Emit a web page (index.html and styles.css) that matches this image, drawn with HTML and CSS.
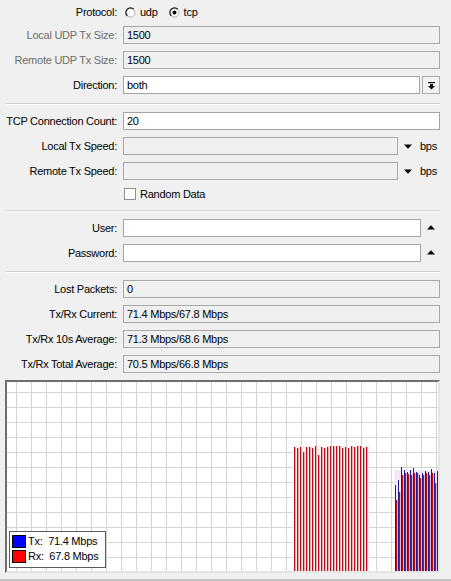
FILE: index.html
```html
<!DOCTYPE html>
<html>
<head>
<meta charset="utf-8">
<link rel="stylesheet" href="styles.css">
</head>
<body>
<div class="panel">
  <div class="row row-protocol">
    <div class="label">Protocol:</div>
    <div class="radios">
      <span class="radio">
        <svg width="11" height="11" viewBox="0 0 11 11"><circle cx="5.5" cy="5.5" r="4.5" fill="#fff" stroke="#b0b0b0" stroke-width="1"/><path d="M2.3 8.7 A4.5 4.5 0 0 1 8.7 2.3" fill="none" stroke="#202020" stroke-width="1.4"/></svg>
        <span>udp</span>
      </span>
      <span class="radio">
        <svg width="11" height="11" viewBox="0 0 11 11"><circle cx="5.5" cy="5.5" r="4.5" fill="#fff" stroke="#b0b0b0" stroke-width="1"/><path d="M2.3 8.7 A4.5 4.5 0 0 1 8.7 2.3" fill="none" stroke="#202020" stroke-width="1.4"/><circle cx="5.5" cy="5.5" r="2" fill="#000"/></svg>
        <span>tcp</span>
      </span>
    </div>
  </div>
  <div class="row">
    <div class="label disabled">Local UDP Tx Size:</div>
    <div class="field off">1500</div>
  </div>
  <div class="row">
    <div class="label disabled">Remote UDP Tx Size:</div>
    <div class="field off">1500</div>
  </div>
  <div class="row">
    <div class="label">Direction:</div>
    <div class="combo">
      <div class="field on">both</div>
      <div class="dropbtn">
        <svg width="7" height="8" viewBox="0 0 7 8"><rect x="0" y="0" width="7" height="1.2" fill="#000"/><rect x="2" y="2.2" width="3" height="2" fill="#000"/><polygon points="0,4 7,4 3.5,7.6" fill="#000"/></svg>
      </div>
    </div>
  </div>
  <div class="sep"></div>
  <div class="row">
    <div class="label">TCP Connection Count:</div>
    <div class="field on">20</div>
  </div>
  <div class="row">
    <div class="label">Local Tx Speed:</div>
    <div class="combo">
      <div class="field off"></div>
      <div class="trail trail-bps">
        <svg class="tri" width="8" height="5" viewBox="0 0 8 5"><polygon points="0,0.5 8,0.5 4,4.8" fill="#000"/></svg>
        <span class="unit">bps</span>
      </div>
    </div>
  </div>
  <div class="row">
    <div class="label">Remote Tx Speed:</div>
    <div class="combo">
      <div class="field off"></div>
      <div class="trail trail-bps">
        <svg class="tri" width="8" height="5" viewBox="0 0 8 5"><polygon points="0,0.5 8,0.5 4,4.8" fill="#000"/></svg>
        <span class="unit">bps</span>
      </div>
    </div>
  </div>
  <div class="row row-check">
    <div class="label"></div>
    <div class="check"><span class="box"></span><span>Random Data</span></div>
  </div>
  <div class="sep"></div>
  <div class="row">
    <div class="label">User:</div>
    <div class="combo">
      <div class="field on"></div>
      <div class="trail trail-up">
        <svg class="tri" width="8" height="5" viewBox="0 0 8 5"><polygon points="0,4.5 8,4.5 4,0.2" fill="#000"/></svg>
      </div>
    </div>
  </div>
  <div class="row">
    <div class="label">Password:</div>
    <div class="combo">
      <div class="field on"></div>
      <div class="trail trail-up">
        <svg class="tri" width="8" height="5" viewBox="0 0 8 5"><polygon points="0,4.5 8,4.5 4,0.2" fill="#000"/></svg>
      </div>
    </div>
  </div>
  <div class="sep"></div>
  <div class="row">
    <div class="label">Lost Packets:</div>
    <div class="field off">0</div>
  </div>
  <div class="row">
    <div class="label">Tx/Rx Current:</div>
    <div class="field off">71.4 Mbps/67.8 Mbps</div>
  </div>
  <div class="row">
    <div class="label">Tx/Rx 10s Average:</div>
    <div class="field off">71.3 Mbps/68.6 Mbps</div>
  </div>
  <div class="row">
    <div class="label">Tx/Rx Total Average:</div>
    <div class="field off">70.5 Mbps/66.8 Mbps</div>
  </div>
  <div class="graph">
    <svg class="bars" width="431" height="189" viewBox="0 0 431 189">
      <g fill="#fff0f0">
        <rect x="286" y="64" width="76" height="125"/>
      </g>
      <g fill="#b80c18">
        <rect x="287" y="65" width="1.3" height="124"/>
        <rect x="290" y="66" width="1.3" height="123"/>
        <rect x="293" y="65" width="1.3" height="124"/>
        <rect x="296" y="70" width="1.3" height="119"/>
        <rect x="299" y="65" width="1.3" height="124"/>
        <rect x="302" y="65" width="1.3" height="124"/>
        <rect x="305" y="66" width="1.3" height="123"/>
        <rect x="308" y="64" width="1.3" height="125"/>
        <rect x="311" y="73" width="1.3" height="116"/>
        <rect x="314" y="65" width="1.3" height="124"/>
        <rect x="317" y="66" width="1.3" height="123"/>
        <rect x="320" y="65" width="1.3" height="124"/>
        <rect x="323" y="64" width="1.3" height="125"/>
        <rect x="326" y="64" width="1.3" height="125"/>
        <rect x="329" y="64" width="1.3" height="125"/>
        <rect x="332" y="64" width="1.3" height="125"/>
        <rect x="335" y="66" width="1.3" height="123"/>
        <rect x="338" y="65" width="1.3" height="124"/>
        <rect x="341" y="66" width="1.3" height="123"/>
        <rect x="344" y="64" width="1.3" height="125"/>
        <rect x="347" y="65" width="1.3" height="124"/>
        <rect x="350" y="64" width="1.3" height="125"/>
        <rect x="353" y="64" width="1.3" height="125"/>
        <rect x="356" y="66" width="1.3" height="123"/>
        <rect x="359" y="65" width="1.3" height="124"/>
      </g>
      <g fill="#f3e6f5">
        <rect x="387.5" y="88" width="43.5" height="101"/>
      </g>
      <g fill="#1c1c9c">
        <rect x="388" y="103" width="1" height="86"/>
        <rect x="391" y="98" width="1" height="91"/>
        <rect x="394" y="85" width="1" height="104"/>
        <rect x="397" y="88" width="1" height="101"/>
        <rect x="400" y="90" width="1" height="99"/>
        <rect x="403" y="88" width="1" height="101"/>
        <rect x="406" y="86" width="1" height="103"/>
        <rect x="409" y="90" width="1" height="99"/>
        <rect x="412" y="93" width="1" height="96"/>
        <rect x="415" y="91" width="1" height="98"/>
        <rect x="418" y="89" width="1" height="100"/>
        <rect x="421" y="90" width="1" height="99"/>
        <rect x="424" y="87" width="1" height="102"/>
        <rect x="427" y="91" width="1" height="98"/>
        <rect x="430" y="89" width="1" height="100"/>
      </g>
      <g fill="#b80c18">
        <rect x="389" y="118" width="1.2" height="71"/>
        <rect x="392" y="110" width="1.2" height="79"/>
        <rect x="395" y="93" width="1.2" height="96"/>
        <rect x="398" y="91" width="1.2" height="98"/>
        <rect x="401" y="92" width="1.2" height="97"/>
        <rect x="404" y="93" width="1.2" height="96"/>
        <rect x="407" y="91" width="1.2" height="98"/>
        <rect x="410" y="91" width="1.2" height="98"/>
        <rect x="413" y="96" width="1.2" height="93"/>
        <rect x="416" y="93" width="1.2" height="96"/>
        <rect x="419" y="91" width="1.2" height="98"/>
        <rect x="422" y="93" width="1.2" height="96"/>
        <rect x="425" y="91" width="1.2" height="98"/>
        <rect x="428" y="101" width="1.2" height="88"/>
        <rect x="431" y="94" width="1.2" height="95"/>
      </g>
    </svg>
    <div class="legend">
      <div class="legend-row"><span class="swatch tx"></span><span class="legend-text">Tx:  71.4 Mbps</span></div>
      <div class="legend-row"><span class="swatch rx"></span><span class="legend-text">Rx:  67.8 Mbps</span></div>
    </div>
  </div>
  <div class="footer"></div>
</div>
</body>
</html>
```
FILE: styles.css
```css
html, body {
  margin: 0;
  padding: 0;
}
body {
  background: #f0f0f0;
  width: 451px;
  height: 581px;
  overflow: hidden;
  font-family: "Liberation Sans", Arial, sans-serif;
  font-size: 11px;
  letter-spacing: -0.25px;
  color: #000;
}
.panel {
  display: flex;
  flex-direction: column;
  gap: 7px;
  padding: 3px 11px 0 0;
}
.row {
  display: grid;
  grid-template-columns: 117px 1fr;
  column-gap: 6px;
  height: 18px;
  line-height: 18px;
}
.row-protocol {
  margin-bottom: -2px;
}
.row-check {
  height: 14px;
  line-height: 14px;
}
.label {
  text-align: right;
  white-space: nowrap;
}
.label.disabled {
  color: #6d6d6d;
}
.field {
  box-sizing: border-box;
  height: 18px;
  line-height: 16px;
  border: 1px solid #a5a5a5;
  padding: 0 3px;
  white-space: nowrap;
  overflow: hidden;
}
.field.on {
  background: #fff;
  border-color: #a4a4a4;
}
.field.off {
  background: #f0f0f0;
  border-color: #a8a8a8;
}
.combo {
  display: flex;
  align-items: center;
  min-width: 0;
}
.combo .field {
  flex: 1;
  min-width: 0;
}
.dropbtn {
  box-sizing: border-box;
  width: 18px;
  height: 18px;
  margin-left: 2px;
  border: 1px solid #acacac;
  background: #f2f2f2;
  display: flex;
  align-items: center;
  justify-content: center;
}
.dropbtn svg {
  display: block;
  margin-top: 1px;
}
.trail {
  display: flex;
  align-items: center;
  height: 18px;
}
.trail-bps {
  width: 42px;
}
.trail-bps .tri {
  margin-left: 6px;
}
.unit {
  margin-left: 8px;
}
.trail-up {
  width: 19px;
}
.trail-up .tri {
  margin-left: 6px;
  margin-top: -1px;
}
.tri {
  display: block;
}
.radios {
  display: flex;
  align-items: center;
}
.radio {
  display: flex;
  align-items: center;
  gap: 4px;
}
.radio:first-child {
  margin-left: 2px;
  margin-right: 11px;
}
.radio svg {
  display: block;
}
.check {
  display: flex;
  align-items: center;
  gap: 4px;
}
.box {
  box-sizing: border-box;
  width: 12px;
  height: 12px;
  margin-left: 1px;
  border: 1px solid #8f8f8f;
  background: #fff;
}
.sep {
  height: 0;
  margin: 2px 0 0 6px;
  border-top: 1px solid #d3d3d3;
  border-bottom: 1px solid #fbfbfb;
}
.graph {
  position: relative;
  box-sizing: border-box;
  width: 435px;
  height: 193px;
  margin-left: 5px;
  border: 2px solid;
  border-color: #6e6e6e #e6e6e6 #e6e6e6 #6e6e6e;
  background-color: #fff;
  background-image:
    linear-gradient(to right, #d4d4d4 1px, transparent 1px),
    linear-gradient(to bottom, #d4d4d4 1px, transparent 1px);
  background-size: 15px 15px;
  background-position: 9px 10px;
}
.bars {
  position: absolute;
  left: 0;
  top: 0;
  display: block;
}
.legend {
  position: absolute;
  left: 2px;
  top: 149px;
  box-sizing: border-box;
  width: 97px;
  height: 37px;
  border: 1px solid #5a5a5a;
  background: #fff;
  padding: 3px 0 0 2px;
  display: flex;
  flex-direction: column;
  gap: 2px;
}
.legend-row {
  display: flex;
  align-items: center;
  height: 13px;
  line-height: 13px;
}
.swatch {
  box-sizing: border-box;
  width: 14px;
  height: 13px;
  border: 1px solid #000;
  margin-right: 2px;
}
.swatch.tx {
  background: #0000ff;
}
.swatch.rx {
  background: #ff0000;
}
.legend-text {
  white-space: pre;
}
.footer {
  margin-top: -1px;
  margin-right: -11px;
  height: 2px;
  background: #c6c6c6;
}
```
